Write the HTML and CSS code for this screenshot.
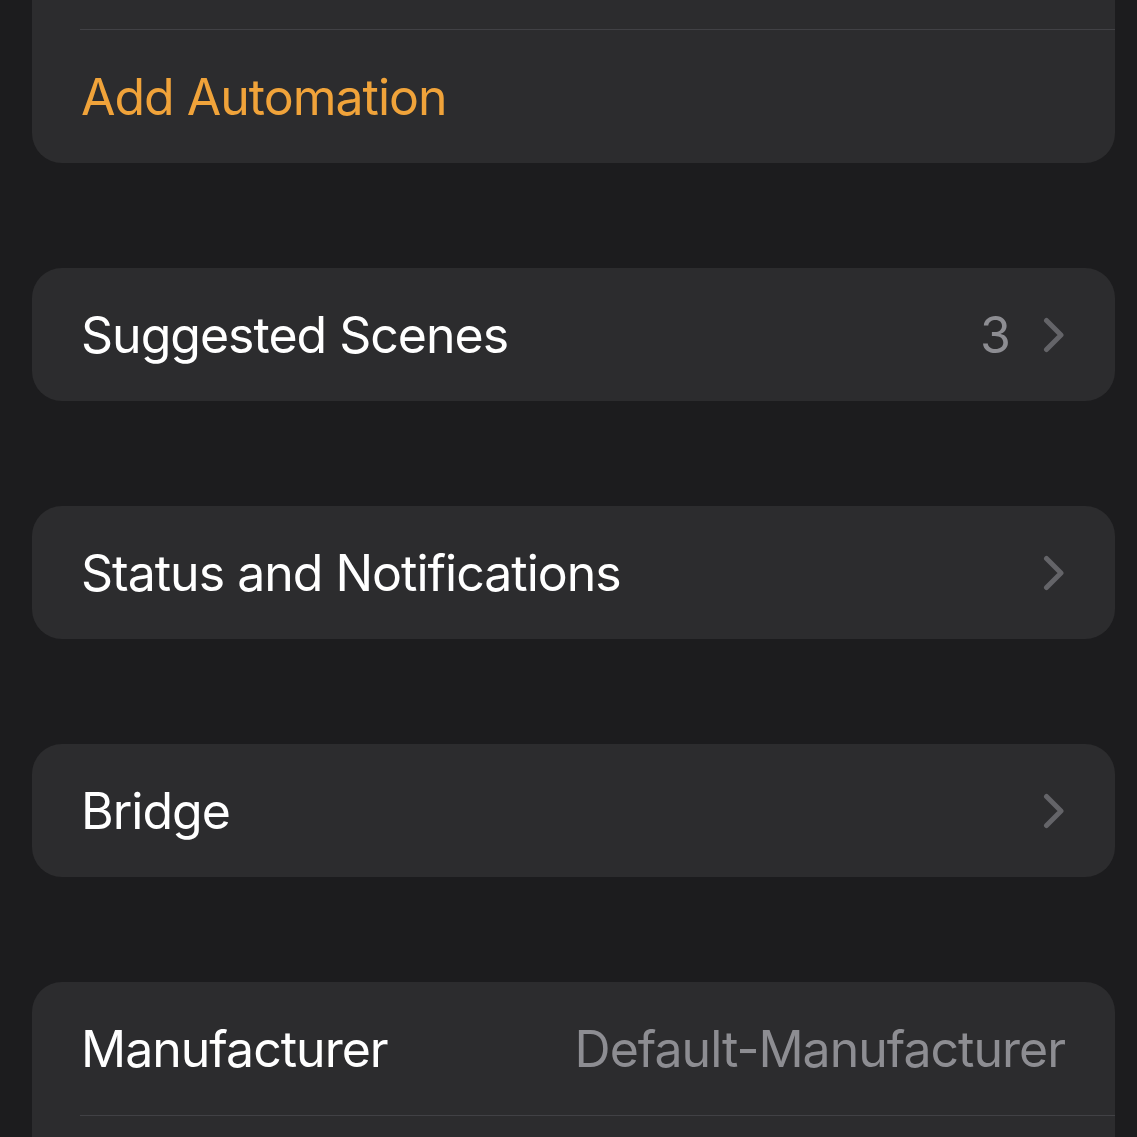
FILE: index.html
```html
<!DOCTYPE html>
<html lang="en">
<head>
<meta charset="utf-8">
<title>Settings</title>
<link rel="stylesheet" href="styles.css">
</head>
<body>
<div class="page">
  <section class="group group-top">
    <div class="row row-hidden"></div>
    <div class="sep"></div>
    <div class="row"><span class="label accent">Add Automation</span></div>
  </section>

  <section class="group">
    <div class="row">
      <span class="label">Suggested Scenes</span>
      <span class="value">3</span>
      <svg class="chev" viewBox="0 0 22 36" width="22" height="36" aria-hidden="true"><polyline points="3.5,3.5 18,18 3.5,32.5" fill="none" stroke="currentColor" stroke-width="5" stroke-linecap="round" stroke-linejoin="round"/></svg>
    </div>
  </section>

  <section class="group">
    <div class="row">
      <span class="label">Status and Notifications</span>
      <svg class="chev" viewBox="0 0 22 36" width="22" height="36" aria-hidden="true"><polyline points="3.5,3.5 18,18 3.5,32.5" fill="none" stroke="currentColor" stroke-width="5" stroke-linecap="round" stroke-linejoin="round"/></svg>
    </div>
  </section>

  <section class="group">
    <div class="row">
      <span class="label">Bridge</span>
      <svg class="chev" viewBox="0 0 22 36" width="22" height="36" aria-hidden="true"><polyline points="3.5,3.5 18,18 3.5,32.5" fill="none" stroke="currentColor" stroke-width="5" stroke-linecap="round" stroke-linejoin="round"/></svg>
    </div>
  </section>

  <section class="group">
    <div class="row">
      <span class="label">Manufacturer</span>
      <span class="value value-end">Default-Manufacturer</span>
    </div>
    <div class="sep"></div>
    <div class="row"></div>
  </section>
</div>
</body>
</html>
```

FILE: styles.css
```css
html, body {
  margin: 0;
  padding: 0;
  background: #1c1c1e;
}

body {
  font-family: Inter, "Noto Sans", "Liberation Sans", sans-serif;
  color: #ffffff;
  overflow: hidden;
  height: 1137px;
}

.page {
  display: flex;
  flex-direction: column;
  gap: 105px;
  padding: 0 22px 0 32px;
  margin-top: -103px;
}

.group {
  background: #2c2c2e;
  border-radius: 30px;
  overflow: hidden;
  display: flex;
  flex-direction: column;
}

.row {
  height: 133px;
  display: flex;
  align-items: center;
  padding: 0 50px 0 49px;
  flex-shrink: 0;
}

.row-hidden {
  height: 132px;
}

.sep {
  height: 1px;
  margin-left: 48px;
  background: #414145;
  flex-shrink: 0;
}

.label {
  flex: 1;
  font-size: 50px;
  letter-spacing: -1px;
  line-height: 1;
  white-space: nowrap;
}

.accent {
  color: #f0a33a;
}

.value {
  font-size: 50px;
  letter-spacing: -1px;
  line-height: 1;
  color: #8d8d92;
  margin-right: 33px;
}

.value-end {
  margin-right: 0;
}

.chev {
  display: block;
  color: #646468;
  flex-shrink: 0;
}
```
